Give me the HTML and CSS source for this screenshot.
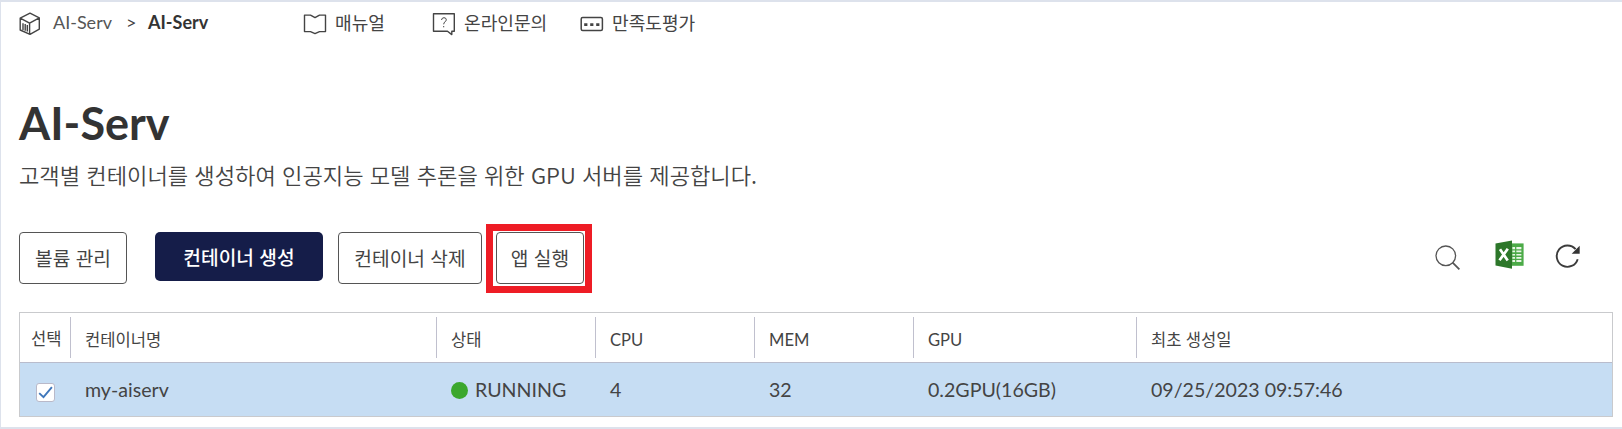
FILE: index.html
```html
<!DOCTYPE html>
<html lang="ko">
<head>
<meta charset="utf-8">
<title>AI-Serv</title>
<link rel="stylesheet" href="styles.css">
</head>
<body>
<main class="frame">
  <header class="topbar">
    <svg class="icon-cube" viewBox="0 0 22 24" width="22" height="24" fill="none" stroke="#444" stroke-width="1.4" stroke-linejoin="round">
      <path d="M11 1.2 20.3 5.8V17.2L11 22.3 1.2 18V6.2ZM1.2 6.2 10.6 11.2 20.3 5.8M10.6 11.2V22.3M4 11.2V18M6.2 12V18.8M8.3 13V19.5"/>
    </svg>
    <nav class="crumbs">
      <span class="crumb">AI-Serv</span>
      <span class="crumb-sep">&gt;</span>
      <b class="crumb-current">AI-Serv</b>
    </nav>
    <a class="toplink toplink-manual">
      <svg viewBox="0 0 24 22" width="24" height="22" fill="none" stroke="#444" stroke-width="1.4" stroke-linejoin="round"><path d="M1.5 2.1H7.5L12 4.6 16.5 2.1H22.5V18.6H16.5L12 20.6 7.5 18.6H1.5Z"/></svg>
      <span>매뉴얼</span>
    </a>
    <a class="toplink toplink-inquiry">
      <svg viewBox="0 0 24 24" width="24" height="24" fill="none" stroke="#444" stroke-width="1.4" stroke-linejoin="round"><path d="M1.5 1.7H22.3V19.2H19.8V22.6L15.5 19.2H1.5Z"/><path d="M9.5 8Q9.8 5.7 12 5.7T14.3 7.8C14.3 9.5 11.7 10 11.7 12.3M11.7 14V15.3" stroke-width="1"/></svg>
      <span>온라인문의</span>
    </a>
    <a class="toplink toplink-rating">
      <svg viewBox="0 0 24 16" width="24" height="16"><rect x="1.2" y="1.4" width="21.2" height="13" rx="1.5" fill="none" stroke="#444" stroke-width="1.5"/><path d="M4.2 8.6H7.4M10.2 8.6H13.4M16.2 8.6H19.4" stroke="#444" stroke-width="2.8" fill="none"/></svg>
      <span>만족도평가</span>
    </a>
  </header>

  <h1 class="title">AI-Serv</h1>
  <p class="lead">고객별 컨테이너를 생성하여 인공지능 모델 추론을 위한 GPU 서버를 제공합니다.</p>

  <section class="toolbar">
    <button class="btn btn-volume">볼륨 관리</button>
    <button class="btn btn-primary">컨테이너 생성</button>
    <button class="btn btn-delete">컨테이너 삭제</button>
    <div class="highlight"><button class="btn btn-run">앱 실행</button></div>
    <div class="tools">
      <svg class="tool-search" viewBox="0 0 26 26" width="26" height="26" fill="none" stroke="#555"><circle cx="10.8" cy="10.8" r="9.8" stroke-width="1.3"/><path d="M17.6 17.7 24.4 24.3" stroke-width="1.8"/></svg>
      <svg class="tool-excel" viewBox="0 0 29 29" width="29" height="29">
        <path d="M16 3.4H28.6V25.8H16Z" fill="#4cab48"/>
        <path d="M17.4 7.1H26.4V9.2H17.4ZM17.4 10.6H26.4V12.2H17.4ZM17.4 13.9H26.4V15.5H17.4ZM17.4 17H26.4V18.7H17.4ZM17.4 20.1H26.4V22H17.4Z" fill="#e9f6e6"/>
        <path d="M20.7 6V23" stroke="#4cab48" stroke-width="1.3"/>
        <path d="M.5 3.5 17 .4V28.7L.5 25.6Z" fill="#2d772a"/>
        <path d="M5 9.2 12.7 20.5M12.8 8.8 4.5 20.3" stroke="#fff" stroke-width="2.7"/>
      </svg>
      <svg class="tool-refresh" viewBox="0 0 26 24" width="26" height="24"><path d="M20.6 5.2A10.7 10.7 0 1 0 22.7 15.2" fill="none" stroke="#3c3c3c" stroke-width="1.9"/><path d="M24.7 1.7V9.7H16.7Z" fill="#333"/></svg>
    </div>
  </section>

  <section class="grid">
    <div class="row row-head">
      <span class="cell cell-select">선택</span>
      <span class="cell">컨테이너명</span>
      <span class="cell">상태</span>
      <span class="cell">CPU</span>
      <span class="cell">MEM</span>
      <span class="cell">GPU</span>
      <span class="cell">최초 생성일</span>
    </div>
    <div class="row row-data">
      <span class="cell cell-select"><span class="checkbox"><svg viewBox="0 0 17 17" width="17" height="17" fill="none" stroke="#3f77bb" stroke-width="1.9"><path d="M2.2 9.1 6.5 13.2 14.9 3.1"/></svg></span></span>
      <span class="cell">my-aiserv</span>
      <span class="cell cell-status"><i class="dot"></i>RUNNING</span>
      <span class="cell">4</span>
      <span class="cell">32</span>
      <span class="cell">0.2GPU(16GB)</span>
      <span class="cell">09/25/2023 09:57:46</span>
    </div>
  </section>
</main>
</body>
</html>
```
FILE: styles.css
```css
* { box-sizing: border-box; }
body {
  margin: 0;
  background: #fff;
  color: #444;
  font-family: Lato, "Noto Sans CJK KR", sans-serif;
}
.frame {
  height: 429px;
  padding: 0 9px 0 18px;
  border: solid #dde2ec;
  border-width: 2px 0 2px 1px;
  overflow: hidden;
}
.topbar {
  display: flex;
  align-items: center;
  height: 39px;
  font-size: 18px;
  line-height: 24px;
  white-space: nowrap;
}
.icon-cube { margin-top: 4px; }
.crumbs { display: flex; width: 250px; margin-left: 12px; }
.crumb { width: 73px; color: #555; }
.crumb-sep { width: 22px; }
.crumb-current { color: #333; }
.toplink { display: flex; align-items: center; }
.toplink span { font-family: "Noto Sans CJK KR", sans-serif; font-size: 18.1px; }
.toplink-manual { width: 129px; gap: 8px; }
.toplink-inquiry { width: 148px; gap: 8px; }
.toplink-rating { gap: 8px; }
.toplink svg { flex: none; margin-top: 5px; }
.title {
  margin: 54px 0 0;
  color: #333;
  font-size: 45px;
  font-weight: 700;
  line-height: 56px;
}
.lead {
  margin: 7px 0 0;
  font: 350 22.15px/32px "Noto Sans CJK KR", sans-serif;
  white-space: nowrap;
}
.toolbar { display: flex; height: 70px; margin-top: 34px; }
.btn {
  height: 52px;
  padding: 0;
  border: 1.5px solid #555;
  border-radius: 4px;
  background: #fff;
  color: #444;
  font: 400 19.2px/28px "Noto Sans CJK KR", sans-serif;
  white-space: nowrap;
}
.toolbar > .btn { margin-top: 8px; }
.btn-volume { width: 108px; }
.toolbar > .btn-primary {
  width: 168px;
  height: 49px;
  margin-left: 28px;
  border: 0;
  border-radius: 5px;
  background: #151d49;
  color: #fff;
  font-weight: 500;
}
.btn-delete { width: 144px; margin-left: 15px; }
.highlight {
  width: 106px;
  height: 69px;
  margin-left: 4px;
  padding: 1px 2px 0 3px;
  border: 7px solid #ee1c25;
}
.btn-run { display: block; width: 88px; }
.tools { display: flex; width: 180px; margin-left: auto; }
.tool-search { margin: 21px 0 0 2px; }
.tool-excel { margin: 16px 0 0 34px; }
.tool-refresh { margin: 20px 0 0 31px; }
.grid { margin-top: 18px; border: 1.5px solid #c9cacd; }
.row {
  display: grid;
  grid-template-columns: 51px 366px 159px 159px 159px 223px 1fr;
  white-space: nowrap;
}
.row-head {
  height: 50px;
  padding: 4px 0 5px;
  border-bottom: 1px solid #b9bccc;
  font-size: 16.6px;
  line-height: 46px;
}
.row-head .cell {
  height: 41px;
  padding-left: 14px;
  border-right: 1px solid #c0c0ce;
}
.row-head .cell-select { padding-left: 11px; line-height: 44px; }
.row-head .cell:last-child { border-right: 0; }
.row-data {
  height: 53px;
  background: #c6ddf3;
  font-size: 19.6px;
  line-height: 54px;
}
.row-data .cell { padding-left: 14px; }
.row-data .cell-select { padding: 20px 0 0 16px; }
.checkbox {
  display: block;
  width: 19px;
  height: 19px;
  border: 1px solid #b9b9c9;
  border-radius: 3px;
  background: #fff;
  line-height: 0;
}
.cell-status { display: flex; align-items: center; gap: 7px; }
.dot { width: 17px; height: 17px; border-radius: 50%; background: #3ba72d; }
```
